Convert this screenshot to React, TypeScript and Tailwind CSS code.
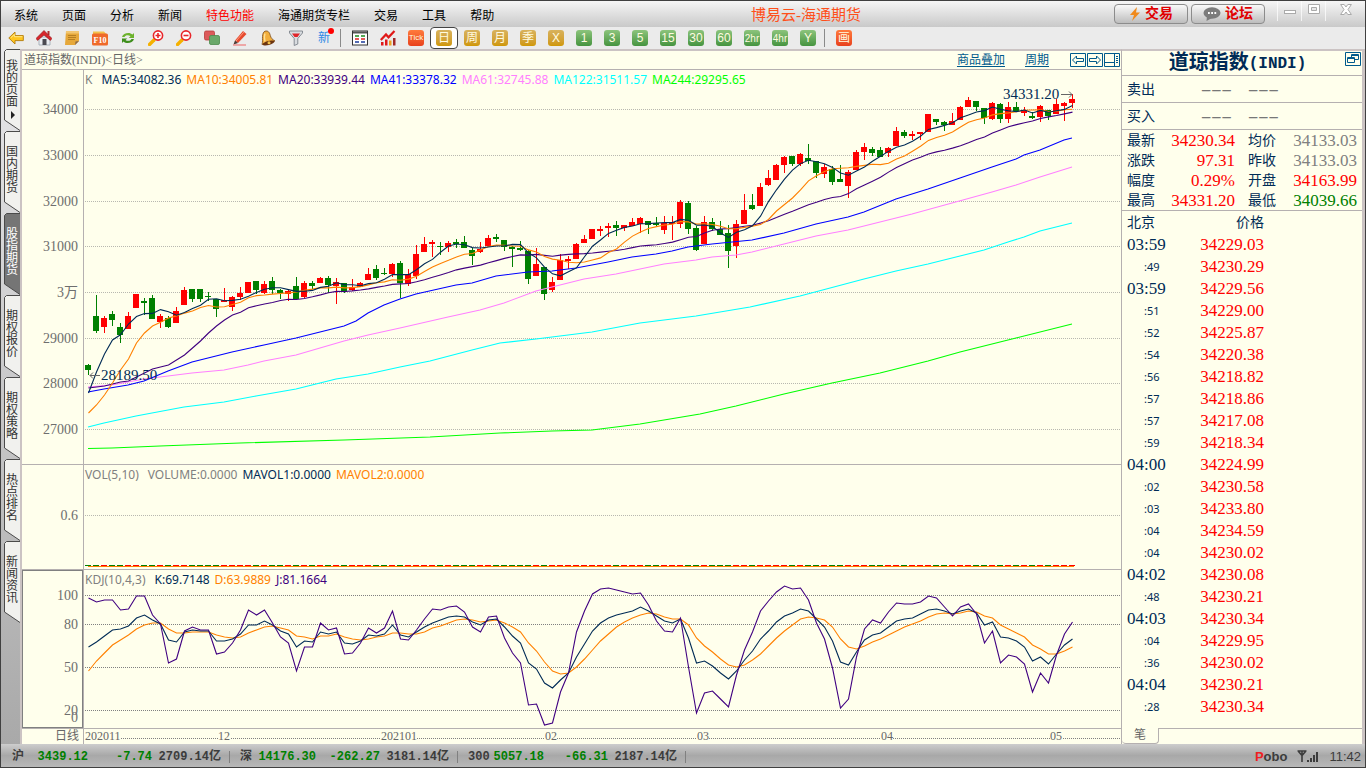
import { type ReactNode } from 'react';
import { clsx } from 'clsx';

// [direction, high, body top, body bottom, low] in chart units
type Candle = ['u' | 'd', number, number, number, number];

const candles: Candle[] = [
  ['d', 364, 365, 370, 375], ['d', 295, 316, 331, 333], ['u', 316, 318, 327, 333], ['d', 311, 314, 320, 326],
  ['d', 323, 327, 335, 343], ['u', 312, 316, 329, 329], ['u', 294, 294, 308, 308], ['d', 298, 301, 303, 315],
  ['d', 295, 298, 319, 319], ['u', 314, 316, 322, 328], ['d', 316, 318, 327, 328], ['u', 307, 311, 323, 323],
  ['u', 287, 290, 305, 305], ['d', 289, 289, 299, 302], ['d', 289, 289, 299, 302], ['d', 292, 296, 297, 301],
  ['d', 299, 299, 309, 317], ['u', 288, 300, 302, 302], ['u', 296, 297, 307, 311], ['u', 287, 293, 297, 300],
  ['u', 282, 282, 293, 293], ['d', 281, 281, 290, 294], ['u', 281, 284, 293, 294], ['d', 277, 281, 290, 294],
  ['d', 289, 290, 293, 299], ['u', 289, 291, 294, 301], ['d', 277, 286, 299, 299], ['u', 281, 283, 297, 298],
  ['d', 281, 283, 286, 289], ['u', 277, 278, 283, 283], ['d', 276, 278, 285, 293], ['u', 278, 282, 286, 304],
  ['d', 283, 283, 292, 293], ['u', 279, 287, 290, 291], ['u', 282, 283, 287, 287], ['u', 268, 274, 280, 280],
  ['d', 265, 269, 278, 280], ['d', 268, 273, 274, 275], ['u', 263, 264, 274, 277], ['d', 261, 263, 283, 298],
  ['u', 269, 274, 284, 286], ['u', 245, 254, 276, 279], ['u', 237, 244, 252, 252], ['u', 240, 242, 244, 257],
  ['d', 242, 246, 247, 255], ['u', 241, 243, 247, 252], ['d', 239, 242, 244, 248], ['d', 236, 242, 248, 248],
  ['d', 248, 250, 256, 265], ['u', 242, 249, 252, 253], ['u', 235, 238, 246, 246], ['d', 234, 237, 239, 242],
  ['d', 240, 240, 247, 251], ['d', 246, 247, 249, 267], ['d', 241, 248, 250, 251], ['d', 250, 251, 279, 284],
  ['u', 248, 264, 276, 276], ['d', 267, 267, 294, 300], ['u', 277, 282, 290, 292], ['u', 254, 260, 280, 280],
  ['u', 256, 259, 261, 269], ['u', 243, 244, 259, 259], ['u', 235, 239, 243, 243], ['u', 229, 229, 239, 239],
  ['u', 226, 229, 231, 236], ['u', 223, 226, 228, 237], ['d', 221, 225, 228, 236], ['u', 225, 225, 228, 231],
  ['u', 218, 222, 226, 226], ['u', 217, 218, 224, 233], ['d', 221, 221, 225, 234], ['d', 217, 223, 225, 226],
  ['u', 216, 223, 230, 234], ['u', 216, 222, 224, 240], ['u', 200, 202, 224, 228], ['d', 201, 203, 229, 234],
  ['d', 226, 228, 250, 251], ['u', 216, 222, 244, 244], ['d', 218, 222, 229, 231], ['d', 221, 229, 235, 235],
  ['d', 225, 233, 251, 268], ['u', 220, 224, 246, 258], ['u', 194, 210, 224, 224], ['d', 194, 205, 209, 210],
  ['u', 183, 187, 206, 206], ['u', 170, 178, 185, 186], ['u', 164, 165, 180, 180], ['u', 156, 157, 165, 173],
  ['d', 156, 156, 164, 166], ['u', 153, 154, 164, 166], ['d', 144, 158, 161, 164], ['d', 161, 161, 173, 178],
  ['u', 164, 167, 174, 178], ['d', 166, 169, 182, 185], ['d', 165, 179, 182, 182], ['u', 170, 172, 186, 198],
  ['u', 150, 152, 170, 170], ['u', 143, 147, 152, 160], ['d', 147, 149, 153, 156], ['d', 147, 150, 157, 157],
  ['u', 147, 148, 153, 157], ['u', 127, 131, 146, 146], ['d', 130, 132, 136, 138], ['u', 131, 134, 136, 140],
  ['u', 132, 132, 134, 140], ['u', 114, 114, 132, 132], ['d', 119, 119, 122, 125], ['d', 121, 122, 125, 131],
  ['u', 113, 121, 125, 125], ['u', 106, 107, 120, 120], ['u', 97, 100, 107, 107], ['d', 101, 101, 107, 111],
  ['d', 108, 108, 118, 124], ['u', 102, 103, 119, 120], ['d', 103, 104, 119, 123], ['u', 102, 107, 119, 123],
  ['d', 102, 107, 111, 112], ['u', 107, 110, 113, 116], ['d', 112, 116, 118, 119], ['u', 105, 106, 117, 122],
  ['d', 110, 110, 116, 120], ['u', 99, 104, 114, 114], ['u', 102, 103, 106, 121], ['u', 94, 99, 103, 108],
];

const closes = candles.map(([dir, , top, bottom]) => (dir === 'u' ? top : bottom));
const xAt = (i: number) => 88 + i * 8;

const toPoints = (values: number[]) => values.map((y, i) => `${xAt(i) + 0.5},${y}`).join(' ');

// the seed holds the values before the window is full
function movingAverage(size: number, seed: number[]) {
  return closes.map((_, i) => {
    if (i < size - 1) return seed[i];
    const part = closes.slice(i - size + 1, i + 1);
    return part.reduce((a, b) => a + b, 0) / size;
  });
}

const priceLines = [
  {
    color: '#00ff00',
    points:
      '88,448.5 112,448 136,447 160,446 240,443 344,440 430,437 500,433 552,431 592,430 640,424 700,414 736,406 784,394 832,383 880,373 928,361 960,352 1016,338 1072,324',
  },
  {
    color: '#00ffff',
    points:
      '88,427 104,423 136,416 184,407 224,402 256,396 296,389 336,379 368,374 400,367 430,361 472,350 500,343 536,339 592,332 640,323 696,316 750,307 800,296 864,279 896,271 928,264 960,256 984,250 1008,242 1024,237 1040,231 1072,223',
  },
  {
    color: '#ff80ff',
    points:
      '88,387 112,385 128,382 144,379 168,376 192,373 224,370 248,365 264,361 296,355 320,348 344,341 368,335 400,328 448,317 480,310 504,303 536,291 552,287 584,279 616,274 664,264 696,260 712,257 736,255 752,252 784,244 816,236 848,230 880,222 912,214 952,203 992,192 1016,185 1040,177 1072,167',
  },
  {
    color: '#0000ff',
    points:
      '88,392 104,389 128,385 144,381 168,371 192,362 232,352 264,345 296,338 320,332 344,326 356,321 368,313 384,305 400,299 416,294 456,285 472,283 496,276 528,272 552,271 576,268 608,262 632,257 656,254 672,251 688,247 712,244 752,240 784,233 816,224 848,217 864,212 896,199 928,189 960,178 992,167 1016,159 1024,155 1040,150 1064,140 1072,138',
  },
  {
    color: '#400080',
    points: toPoints(
      movingAverage(20, [388, 387, 386, 384, 382, 381, 377, 373, 369, 367, 365, 360, 355, 348, 341, 333, 326, 320, 315]),
    ),
  },
  { color: '#ff8000', points: toPoints(movingAverage(10, [413, 405, 395, 383, 370, 359, 343, 333, 326])) },
  { color: '#002b56', points: toPoints(movingAverage(5, [393, 372, 354, 340])) },
];

const kdjLines = [
  {
    color: '#ff8000',
    points: toPoints([
      671, 661, 653, 645, 640, 635, 629, 625, 623, 623, 629, 633, 633, 632, 632, 632, 635, 637, 638, 637, 633, 630, 627,
      626, 628, 630, 636, 637, 639, 636, 636, 634, 637, 639, 640, 639, 637, 636, 633, 633, 634, 634, 632, 628, 626, 623,
      620, 619, 620, 622, 621, 620, 623, 627, 632, 643, 651, 662, 671, 674, 673, 667, 659, 650, 641, 634, 627, 622, 618,
      615, 613, 614, 617, 619, 619, 625, 638, 646, 652, 659, 665, 667, 665, 660, 654, 646, 638, 631, 625, 619, 617, 618,
      620, 627, 639, 647, 649, 646, 642, 639, 635, 631, 627, 624, 621, 617, 614, 613, 614, 613, 611, 612, 616, 618, 625,
      629, 633, 637, 645, 649, 654, 654, 651, 647,
    ]),
  },
  {
    color: '#002b56',
    points: toPoints([
      647, 642, 636, 630, 629, 626, 618, 615, 620, 624, 640, 642, 632, 630, 631, 631, 641, 641, 639, 634, 625, 625, 621,
      625, 631, 634, 647, 641, 642, 632, 634, 632, 643, 644, 641, 635, 636, 634, 625, 635, 637, 632, 627, 623, 620, 617,
      616, 617, 622, 625, 620, 619, 627, 636, 643, 663, 669, 683, 688, 680, 673, 657, 644, 631, 623, 618, 615, 613, 611,
      607, 611, 616, 621, 623, 619, 638, 663, 661, 666, 673, 679, 671, 660, 651, 639, 631, 622, 616, 613, 609, 611, 619,
      627, 641, 662, 665, 652, 640, 635, 633, 627, 621, 619, 618, 614, 610, 609, 611, 614, 611, 609, 613, 625, 622, 637,
      638, 641, 647, 661, 657, 664, 654, 645, 639,
    ]),
  },
  {
    color: '#400080',
    points: toPoints([
      598, 602, 600, 600, 610, 609, 596, 596, 615, 624, 663, 659, 631, 627, 630, 630, 654, 652, 643, 630, 610, 615, 610,
      623, 637, 643, 671, 647, 647, 623, 630, 628, 654, 653, 643, 628, 633, 628, 611, 639, 640, 630, 619, 609, 610, 607,
      606, 612, 627, 632, 617, 616, 638, 653, 663, 705, 704, 725, 723, 692, 673, 632, 611, 594, 589, 588, 590, 592, 594,
      593, 605, 621, 631, 632, 618, 667, 713, 693, 691, 699, 707, 675, 650, 632, 611, 601, 592, 586, 589, 588, 600, 623,
      639, 668, 708, 699, 657, 629, 620, 623, 612, 603, 604, 604, 602, 596, 598, 607, 616, 607, 604, 614, 643, 631, 663,
      655, 657, 664, 692, 673, 683, 655, 634, 622,
    ]),
  },
];

const priceAxis: [string, number][] = [
  ['34000', 109], ['33000', 155], ['32000', 201], ['31000', 246],
  ['3万', 292], ['29000', 338], ['28000', 383], ['27000', 429],
];
const kdjAxis: [string, number][] = [['100', 595], ['80', 624], ['50', 667], ['20', 710]];
const months: [string, number, number][] = [
  ['202011', 85, 36], ['12', 218, 12], ['202101', 381, 36], ['02', 545, 12],
  ['03', 697, 12], ['04', 881, 12], ['05', 1050, 12],
];

const menu = ['系统', '页面', '分析', '新闻', '特色功能', '海通期货专栏', '交易', '工具', '帮助'];
const sideTabs = ['我的页面', '国内期货', '股指期货', '期权报价', '期权策略', '热点排名', '新闻资讯'];

const quotes = [
  ['最新', '34230.34', 'text-[#ff0000]', '均价', '34133.03', 'text-[#808080]'],
  ['涨跌', '97.31', 'text-[#ff0000]', '昨收', '34133.03', 'text-[#808080]'],
  ['幅度', '0.29%', 'text-[#ff0000]', '开盘', '34163.99', 'text-[#ff0000]'],
  ['最高', '34331.20', 'text-[#ff0000]', '最低', '34039.66', 'text-[#008000]'],
];

const ticks = [
  ['03:59', '34229.03'], [':49', '34230.29'], ['03:59', '34229.56'], [':51', '34229.00'], [':52', '34225.87'],
  [':54', '34220.38'], [':56', '34218.82'], [':57', '34218.86'], [':57', '34217.08'], [':59', '34218.34'],
  ['04:00', '34224.99'], [':02', '34230.58'], [':03', '34233.80'], [':04', '34234.59'], [':04', '34230.02'],
  ['04:02', '34230.08'], [':48', '34230.21'], ['04:03', '34230.34'], [':04', '34229.95'], [':36', '34230.02'],
  ['04:04', '34230.21'], [':28', '34230.34'],
];

const indexes = [
  ['沪', '3439.12', '-7.74', '2709.14亿'],
  ['深', '14176.30', '-262.27', '3181.14亿'],
  ['300', '5057.18', '-66.31', '2187.14亿'],
];

function Svg({ children }: { children: ReactNode }) {
  return (
    <svg width="16" height="16" viewBox="0 0 16 16" aria-hidden="true">
      {children}
    </svg>
  );
}

function Magnifier({ plus }: { plus?: boolean }) {
  return (
    <Svg>
      <path d="M1.5 14.5 6 10" stroke="#f5b100" strokeWidth="3.4" strokeLinecap="round" />
      <circle cx="10" cy="5.5" r="4.6" fill="#fff" stroke="#e8262a" strokeWidth="1.6" />
      <path d={plus ? 'M7.5 5.5h5M10 3v5' : 'M7.5 5.5h5'} stroke="#e8262a" strokeWidth="1.6" />
    </Svg>
  );
}

const leftTools: [string, ReactNode][] = [
  [
    '后退',
    <Svg>
      <path d="M.8 8 7 2v3.6h8.3v5H7V14z" fill="#ffc61f" stroke="#b98416" strokeWidth="1" />
      <path d="M3 7.6 6.4 4.4v2.3h8" fill="none" stroke="#ffe88a" />
    </Svg>,
  ],
  [
    '首页',
    <Svg>
      <path d="M3 7h11v8H3z" fill="#e9edf2" stroke="#9aa4b0" strokeWidth=".8" />
      <path d="M11.5 1h2v4h-2z" fill="#b03030" />
      <path d="M0 8.500 8 .5l8 8-1.600 1.900L8 5 1.600 10.400z" fill="#d8262c" stroke="#8a1418" strokeWidth=".6" />
      <path d="M6.500 9h4v6h-4z" fill="#4a4a52" />
    </Svg>,
  ],
  [
    '笔记',
    <Svg>
      <path d="M2 1h13v10l-4 4H1z" fill="#e6a83a" />
      <path d="M2 1h13v2.5H2z" fill="#f2c671" />
      <path d="m11 15 .5-3.5L15 11z" fill="#8a6a4a" />
      <path d="M4 5.5h8M4 7.5h8M4 9.5h7" stroke="#b07a20" strokeWidth=".9" />
    </Svg>,
  ],
  [
    'F10',
    <Svg>
      <path d="M1 1.500h11l3 3.500H1z" fill="#f3c14a" />
      <rect x="0" y="3.500" width="16" height="12" rx="1.500" fill="#ef6a2a" />
      <text x="8" y="13" textAnchor="middle" fontSize="8" fontWeight="bold" fontFamily="Liberation Serif, serif" fill="#fff">
        F10
      </text>
    </Svg>,
  ],
  [
    '刷新',
    <Svg>
      <path d="M2 7c1-4 7.500-5.500 10.500-2.500l1.500-1.500V8H8.800L10.500 6.300C8.500 4.800 5.500 5 4.500 7z" fill="#6cb22c" />
      <path d="M14 9c-1 4-7.500 5.500-10.500 2.500L2 13V8.500h5.200L5.500 10C7.500 11.500 10.500 11 11.500 9z" fill="#3e8e1c" />
    </Svg>,
  ],
  ['放大', <Magnifier plus />],
  ['缩小', <Magnifier />],
  [
    '叠加',
    <Svg>
      <rect x=".5" y="1" width="10" height="9" rx="1.500" fill="#dc5a5a" stroke="#b83c3c" strokeWidth=".8" />
      <rect x="5.500" y="5.500" width="10" height="9" rx="1.500" fill="#6aa86a" stroke="#4d8c4d" strokeWidth=".8" />
    </Svg>,
  ],
  [
    '画线',
    <Svg>
      <path d="M3 10.500 11 1 14.500 4 6 13z" fill="#e64a2e" />
      <path d="M4 11 11.800 2.200" stroke="#ff9a80" strokeWidth="1" />
      <path d="m3 10.500 3 2.500-4.500 1.500z" fill="#4a3a34" />
      <path d="M1 15h13" stroke="#ef7a7a" strokeWidth="1.200" />
    </Svg>,
  ],
  [
    '预警',
    <Svg>
      <path d="M5 1.200c3-.8 4.500 1 5.300 4.300.6 2.500 2 4 4.700 5.500L2 14.500c.9-3 .3-5.500.5-8C2.700 3.500 3.500 1.800 5 1.200z" fill="#f2ae3c" stroke="#7a4a1a" strokeWidth=".8" />
      <path d="M5 3.500c-.8 2-.6 5 0 8" stroke="#ffe09a" strokeWidth="1.300" fill="none" />
      <ellipse cx="8.500" cy="13" rx="6" ry="2" transform="rotate(-14 8.500 13)" fill="#6b3410" />
      <circle cx="9" cy="12.800" r="1.500" fill="#f2c04a" />
    </Svg>,
  ],
  [
    '筛选',
    <Svg>
      <path d="M1.500 1h13v2L9.800 8.500V14l-3.600 1.500v-7L1.500 3z" fill="#d9dce0" stroke="#7d838b" strokeWidth=".9" />
      <path d="M4 3.500h8L9.500 7h-3z" fill="#e0242a" />
    </Svg>,
  ],
  [
    '新',
    <span className="relative text-xs text-[#2f8ae6]">
      新<span className="absolute -top-0.5 -right-1 size-1.5 rounded-full bg-[#ff0000]" />
    </span>,
  ],
];

const viewTools: [string, ReactNode][] = [
  [
    '报价表',
    <Svg>
      <rect x=".5" y="1" width="15" height="14" fill="#fff" stroke="#333" />
      <path d="M1 2.500h14" stroke="#555" strokeWidth="2" />
      <path d="M3 6h4M9 6h4" stroke="#1d8a1d" strokeWidth="1.400" />
      <path d="M3 9h4M9 9h4" stroke="#d22" strokeWidth="1.400" />
      <path d="M3 12h4M9 12h4" stroke="#1c3c9c" strokeWidth="1.400" />
    </Svg>,
  ],
  [
    '走势图',
    <Svg>
      <path d="M.8 10 6 4.500l2.500 2.800L14.500 1" fill="none" stroke="#e01818" strokeWidth="2.200" />
      <path d="M1 12h2.500v3.500H1zM5 9.500h2.500v6H5z" fill="#e01818" />
      <path d="M9 10.500h2.500v5H9z" fill="#f0a020" />
      <path d="M13 8h2.500v7.500H13z" fill="#a02828" />
    </Svg>,
  ],
];

const periodTiles: [string, 'gold' | 'green'][] = [
  ['日', 'gold'], ['周', 'gold'], ['月', 'gold'], ['季', 'gold'], ['X', 'gold'],
  ['1', 'green'], ['3', 'green'], ['5', 'green'], ['15', 'green'], ['30', 'green'],
  ['60', 'green'], ['2hr', 'green'], ['4hr', 'green'], ['Y', 'green'],
];

function Tile({ label, tone }: { label: string; tone: 'gold' | 'green' | 'red' }) {
  return (
    <span
      className={clsx(
        "flex size-4 items-center justify-center rounded-[3px] bg-linear-to-b font-['Liberation_Sans','Noto_Sans_CJK_SC',sans-serif] whitespace-nowrap text-[#fffbe0]",
        label.length > 3 && 'text-[8px]',
        label.length === 3 && 'text-[10px]',
        label.length < 3 && 'text-xs',
        tone === 'gold' && 'from-[#d8b25c] to-[#d09800]',
        tone === 'green' && 'from-[#8cc47c] to-[#45943f]',
        tone === 'red' && 'from-[#ff7a3c] to-[#e8401c]',
      )}
    >
      {label}
    </span>
  );
}

function ToolButton({ label, active, children }: { label: string; active?: boolean; children: ReactNode }) {
  return (
    <button
      aria-label={label}
      className={clsx(
        'flex h-[22px] w-7 items-center justify-center',
        active && 'rounded-sm border border-[#444] bg-white',
      )}
    >
      {children}
    </button>
  );
}

function TitleBar() {
  return (
    <header className="flex h-[26px] bg-linear-to-b from-[#f6f6f6] to-[#c9c9c9] pl-[13px]">
      <nav className="flex items-center gap-6 pt-1 text-xs text-black">
        {menu.map((item) => (
          <button key={item} className={clsx(item === '特色功能' && 'text-[#ff0000]')}>
            {item}
          </button>
        ))}
      </nav>
      <h1 className="flex-1 pt-1 pl-1 text-center text-[15px] leading-5 text-[#ff4f1a]">博易云-海通期货</h1>
      <div className="flex gap-[3px] pt-[3px]">
        <button className="flex h-5 w-[74px] items-center justify-center gap-1 rounded-sm border border-[#8c8c8c] bg-linear-to-b from-[#fafafa] to-[#bdbdbd] text-sm font-bold text-[#e00000]">
          <svg width="12" height="14" viewBox="0 0 12 14">
            <path d="M8 0 1 8h4L3 14l8-8.500H7z" fill="#f08a1c" />
          </svg>
          交易
        </button>
        <button className="flex h-5 w-[74px] items-center justify-center gap-1 rounded-sm border border-[#8c8c8c] bg-linear-to-b from-[#fafafa] to-[#bdbdbd] text-sm font-bold text-[#e00000]">
          <svg width="18" height="14" viewBox="0 0 18 14">
            <ellipse cx="9" cy="6" rx="8.500" ry="5.700" fill="#7c7c7c" />
            <path d="m4 9-.5 5L9 11z" fill="#7c7c7c" />
            <path d="M5 6h1.800M8.200 6H10M11.400 6h1.800" stroke="#fff" strokeWidth="1.800" />
          </svg>
          论坛
        </button>
      </div>
      <div className="ml-3 flex h-5 text-[#a8a8a8]">
        <button aria-label="最小化" className="flex w-6 justify-center border-l border-white/70 pt-[9px]">
          <svg width="12" height="5" viewBox="0 0 12 5">
            <rect x=".5" y=".5" width="11" height="3" fill="#fff" stroke="#aaa" />
          </svg>
        </button>
        <button aria-label="最大化" className="flex w-6 justify-center border-l border-white/70 pt-[3px]">
          <svg width="12" height="10" viewBox="0 0 12 10">
            <path d="M.5.500h11v9H.5zM3.500 3.500h5v3h-5z" fill="#fff" fillRule="evenodd" stroke="#aaa" />
          </svg>
        </button>
        <button aria-label="关闭" className="flex w-10 justify-center border-l border-white/70 pt-[3px]">
          <svg width="12" height="11" viewBox="0 0 12 11">
            <path d="M.6.500h3.600L6 3 7.800.500h3.600L8 5.500l3.400 5H7.800L6 8l-1.800 2.500H.6l3.400-5z" fill="#fff" stroke="#aaa" />
          </svg>
        </button>
      </div>
    </header>
  );
}

function Divider() {
  return <span className="mr-[5px] ml-0.5 h-[18px] w-px bg-[#8a8a8a]" />;
}

function Toolbar() {
  return (
    <div className="flex h-[22px] items-center bg-[#ebebeb] pl-px">
      {leftTools.map(([label, icon]) => (
        <ToolButton key={label} label={label}>
          {icon}
        </ToolButton>
      ))}
      <Divider />
      {viewTools.map(([label, icon]) => (
        <ToolButton key={label} label={label}>
          {icon}
        </ToolButton>
      ))}
      <ToolButton label="Tick">
        <Tile label="Tick" tone="red" />
      </ToolButton>
      {periodTiles.map(([label, tone]) => (
        <ToolButton key={label} label={label} active={label === '日'}>
          <Tile label={label} tone={tone} />
        </ToolButton>
      ))}
      <Divider />
      <ToolButton label="画面">
        <Tile label="画" tone="red" />
      </ToolButton>
    </div>
  );
}

function SideTabs() {
  return (
    <aside className="w-[19px] bg-linear-to-b from-[#e8e8ea] to-[#a9a9a9] pl-[3px]">
      {sideTabs.map((tab, i) => {
        const active = tab === '股指期货';
        return (
          <button
            key={tab}
            className={clsx(
              'relative flex h-[82px] w-4 flex-col items-center text-xs leading-3',
              i === 0 ? 'pt-[11px]' : 'pt-[15px]',
              active ? 'text-white' : 'text-[#333]',
            )}
          >
            <svg className="absolute inset-0" width="16" height="83" viewBox="0 0 16 83">
              <path
                d="M16 .5H2.500L.5 2.500V71L16 81.500z"
                fill={active ? '#757575' : '#f1f1ee'}
                stroke="none"
              />
              <path d="M16 .5H2.500L.5 2.500V71L16 81.500" fill="none" stroke="#4a4a4a" />
            </svg>
            <span className="relative w-3 break-all">{tab}</span>
            {i === 0 && <span className="relative mt-[3px] ml-0.5 border-y-4 border-l-4 border-y-transparent border-l-[#222]" />}
          </button>
        );
      })}
    </aside>
  );
}

function Grid({ ys, color }: { ys: number[]; color: string }) {
  return (
    <>
      {ys.map((y) => (
        <line key={y} x1="85" x2="1121" y1={y + 0.5} y2={y + 0.5} stroke={color} strokeDasharray="1 1" shapeRendering="crispEdges" />
      ))}
    </>
  );
}

function Lines({ lines }: { lines: { color: string; points: string }[] }) {
  return (
    <>
      {lines.map((line) => (
        <polyline key={line.color} points={line.points} fill="none" stroke={line.color} strokeWidth="1.100" />
      ))}
    </>
  );
}

function Axis({ labels, box }: { labels: [string, number][]; box: string }) {
  return (
    <svg className="block size-full" viewBox={box} preserveAspectRatio="xMinYMin slice">
      {labels.map(([label, y]) => (
        <text key={label} x="78" y={y + 5} textAnchor="end" fontSize="14" fill="#6e6e6e">
          {label}
        </text>
      ))}
    </svg>
  );
}

function Legend({ items }: { items: [string, string][] }) {
  return (
    <p className="flex h-5 items-center gap-[5px] pl-px font-['Noto_Sans'] text-xs whitespace-nowrap">
      {items.map(([text, color], i) => (
        <span key={text} className={clsx(color, i === 0 && 'mr-1')}>
          {text}
        </span>
      ))}
    </p>
  );
}

function PricePanel() {
  return (
    <section className="flex h-[395px] border-b border-[#b5b0b0]">
      <div className="w-[62px] border-r border-[#b5b0b0]">
        <Axis labels={priceAxis} box="22 70 61 394" />
      </div>
      <div className="min-w-0 flex-1">
        <Legend
          items={[
            ['K', 'text-[#808080]'],
            ['MA5:34082.36', 'text-[#002b56]'],
            ['MA10:34005.81', 'text-[#ff8000]'],
            ['MA20:33939.44', 'text-[#400080]'],
            ['MA41:33378.32', 'text-[#0000ff]'],
            ['MA61:32745.88', 'text-[#ff80ff]'],
            ['MA122:31511.57', 'text-[#00ffff]'],
            ['MA244:29295.65', 'text-[#00ff00]'],
          ]}
        />
        <svg className="block h-[374px] w-full overflow-visible" viewBox="84 90 1037 374" preserveAspectRatio="xMinYMin meet">
          <Grid ys={priceAxis.map(([, y]) => y)} color="#b8b8b0" />
          {candles.map(([dir, high, top, bottom, low], i) => (
            <g key={i} fill={dir === 'u' ? '#ff0000' : '#008000'} shapeRendering="crispEdges">
              <rect x={xAt(i)} y={high} width="1" height={low - high} />
              <rect x={xAt(i) - 3} y={top} width="6" height={bottom - top} />
            </g>
          ))}
          <Lines lines={priceLines} />
          <g fontSize="15" fill="#002b56">
            <text x="101" y="380">28189.50</text>
            <text x="1003" y="99">34331.20</text>
          </g>
          <path d="M90 375.500h10M93 372.500l-3 3 3 3M1061 94.500h11M1069 91.500l3 3-3 3" fill="none" stroke="#666" />
        </svg>
      </div>
    </section>
  );
}

function VolumePanel() {
  return (
    <section className="flex h-[105px] border-b border-[#b5b0b0]">
      <div className="w-[62px] border-r border-[#b5b0b0]">
        <Axis labels={[['0.6', 515]]} box="22 465 61 104" />
      </div>
      <div className="min-w-0 flex-1">
        <Legend
          items={[
            ['VOL(5,10)', 'text-[#808080]'],
            ['VOLUME:0.0000', 'text-[#808080]'],
            ['MAVOL1:0.0000', 'text-[#002b56]'],
            ['MAVOL2:0.0000', 'text-[#ff8000]'],
          ]}
        />
        <svg className="block h-[84px] w-full" viewBox="84 485 1037 84" preserveAspectRatio="xMinYMin meet">
          <Grid ys={[515]} color="#b8b8b0" />
          <g shapeRendering="crispEdges">
            {candles.map(([dir], i) => (
              <rect key={i} x={xAt(i) - 3} y="565" width="6" height="1" fill={dir === 'u' ? '#ff0000' : '#008000'} />
            ))}
            <rect x="88" y="566" width="986" height="1" fill="#ff8000" />
          </g>
        </svg>
      </div>
    </section>
  );
}

function KdjPanel() {
  return (
    <section className="flex h-[159px] border-b border-[#b5b0b0]">
      <div className="w-[62px] border-r border-[#b5b0b0]">
        <div className="h-full border border-[#808080]">
          <Axis labels={[...kdjAxis, ['0', 717]]} box="23 571 59 156" />
        </div>
      </div>
      <div className="min-w-0 flex-1">
        <Legend
          items={[
            ['KDJ(10,4,3)', 'text-[#808080]'],
            ['K:69.7148', 'text-[#002b56]'],
            ['D:63.9889', 'text-[#ff8000]'],
            ['J:81.1664', 'text-[#400080]'],
          ]}
        />
        <svg className="block h-[138px] w-full overflow-visible" viewBox="84 590 1037 138" preserveAspectRatio="xMinYMin meet">
          <Grid ys={kdjAxis.map(([, y]) => y)} color="#808080" />
          <Lines lines={kdjLines} />
        </svg>
      </div>
    </section>
  );
}

function ChartArea() {
  return (
    <main className="min-w-0 flex-1 border-t-2 border-l-2 border-[#cbc3c3] bg-[#ffffec]">
      <div className="flex h-[19px] items-center border-b border-[#b5b0b0] pl-0.5 text-xs">
        <h2 className="flex-1 text-[#666]">道琼指数(INDI)&lt;日线&gt;</h2>
        <a href="#overlay" className="mr-5 text-[#005a8c] underline underline-offset-2">
          商品叠加
        </a>
        <a href="#period" className="mr-[21px] text-[#005a8c] underline underline-offset-2">
          周期
        </a>
        <div className="mr-px flex gap-px">
          <button aria-label="向左">
            <svg className="block" width="16" height="14" viewBox="0 0 16 14" fill="none" stroke="#005a8c">
              <path d="M.5.500h15v13H.5z" />
              <path d="M2.500 7 6.500 3v2.500h7v3h-7V11z" />
            </svg>
          </button>
          <button aria-label="向右">
            <svg className="block" width="16" height="14" viewBox="0 0 16 14" fill="none" stroke="#005a8c">
              <path d="M.5.500h15v13H.5z" />
              <path d="M13.500 7 9.500 3v2.500h-7v3h7V11z" />
            </svg>
          </button>
          <button aria-label="侧栏">
            <svg className="block" width="16" height="14" viewBox="0 0 16 14" fill="none" stroke="#005a8c">
              <path d="M.5.500h15v13H.5zM10.500 0v14M0 9.500h10" />
              <path d="M12 3.500h2M12 5.500h2M12 7.500h2M12 9.500h2" />
            </svg>
          </button>
        </div>
      </div>
      <PricePanel />
      <VolumePanel />
      <KdjPanel />
      <div className="flex h-[15px]">
        <div className="w-[62px] border-r border-[#b5b0b0] pr-1 text-right text-xs leading-[14px] text-[#666]">日线</div>
        <svg className="block h-[15px] min-w-0 flex-1" viewBox="84 729 1037 15" preserveAspectRatio="xMinYMin meet">
          <Grid ys={[738]} color="#808080" />
          {months.map(([label, x, width]) => (
            <g key={label}>
              <rect x={x} y="730" width={width} height="13" fill="#ffffec" />
              <text x={x} y="740" fontSize="12" fill="#666">
                {label}
              </text>
            </g>
          ))}
        </svg>
      </div>
    </main>
  );
}

function QuotePanel() {
  return (
    <aside className="flex w-[241px] flex-col border-t-2 border-l border-t-[#cbc3c3] border-l-[#b5b0b0] bg-[#ffffec] text-sm text-[#002b56]">
      <div className="flex h-[25px] border-b border-[#b5b0b0]">
        <h2 className="flex flex-1 items-center justify-center pt-0.5 pl-2 font-['Liberation_Mono','Noto_Sans_CJK_SC',monospace] font-bold">
          <span className="text-xl leading-5">道琼指数</span>
          <span className="text-base leading-5">(INDI)</span>
        </h2>
        <button aria-label="还原" className="self-start pt-px pr-px">
          <svg className="block" width="16" height="14" viewBox="0 0 16 14" fill="none" stroke="#005a8c">
            <path d="M.5.500h15v13H.5z" />
            <path d="M6.500 5V2.500h7v5H10M6.500 3.500h7" />
            <path d="M2.500 5.500h7v5h-7zM2.500 6.500h7" fill="#ffffec" />
          </svg>
        </button>
      </div>
      {['卖出', '买入'].map((side) => (
        <div key={side} className="flex h-[27px] items-center border-b border-[#b5b0b0] pt-0.5 pl-[5px]">
          <span className="w-[74px]">{side}</span>
          <span className="flex gap-4 font-['Noto_Sans'] text-lg leading-6 text-[#777]">
            <span>−−−</span>
            <span>−−−</span>
          </span>
        </div>
      ))}
      <div className="border-b border-[#b5b0b0] pt-px">
        <table className="h-[79px] w-full">
          <tbody>
            {quotes.map(([a, av, ac, b, bv, bc]) => (
              <tr key={a} className="leading-[19px]">
                <th scope="row" className="w-[34px] pl-[5px] text-left font-normal">{a}</th>
                <td className={clsx('w-[79px] text-right text-[17px]', ac)}>{av}</td>
                <th scope="row" className="w-[42px] pl-[13px] text-left font-normal">{b}</th>
                <td className={clsx('pr-[5px] text-right text-[17px]', bc)}>{bv}</td>
              </tr>
            ))}
          </tbody>
        </table>
      </div>
      <table className="mt-px w-[142px]">
        <thead>
          <tr className="h-[22px] leading-[22px]">
            <th className="pl-[5px] text-left font-normal">北京</th>
            <th className="text-right font-normal">价格</th>
          </tr>
        </thead>
        <tbody>
          {ticks.map(([time, price], i) => (
            <tr key={i} className="h-[22px] leading-[22px]">
              <td className={time.length > 3 ? 'pl-[5px] text-[17px]' : "pl-[22px] font-['Noto_Sans'] text-[11px]"}>
                {time}
              </td>
              <td className="text-right text-[17px] text-[#ff0000]">{price}</td>
            </tr>
          ))}
        </tbody>
      </table>
      <div className="mt-auto flex h-4">
        <button className="w-[37px] rounded-b-sm border-r border-b border-[#b5b0b0] text-xs leading-[15px] text-[#666]">笔</button>
        <span className="flex-1 border-t border-[#b5b0b0]" />
      </div>
    </aside>
  );
}

function StatusBar() {
  return (
    <footer className="flex h-[23px] items-center bg-linear-to-b from-[#cdcdcd] via-[#a8a8a8] to-[#b8b8b8] pt-0.5 pl-[11px] font-['Liberation_Mono','Noto_Sans_CJK_SC',monospace] text-xs font-bold text-[#3c3c3c]">
      {indexes.map(([name, value, change, amount]) => (
        <div key={name} className="flex items-center">
          <span className="flex w-[76px] justify-between">
            {name}
            <span className="text-[#008000]">{value}</span>
          </span>
          <span className="w-16 text-right text-[#008000]">{change}</span>
          <span className="w-[69px] text-right whitespace-nowrap">{amount}</span>
          <span className="mr-[10px] ml-2 h-3 w-px bg-[#808080]" />
        </div>
      ))}
      <span className="ml-auto font-['Liberation_Sans'] text-[13px] leading-4">
        <span className="text-[#f02020]">P</span>obo
      </span>
      <svg className="mx-2.5" width="22" height="13" viewBox="0 0 22 13" fill="none" stroke="#3c3c3c">
        <path d="M.5 1h9M1.500 1.500 5 5.500l3.500-4M5 1v11" strokeWidth="1.600" />
        <path d="M11 10v2M14 8v4M17 5v7M20 2v10" strokeWidth="2" />
      </svg>
      <time className="pr-1 font-['Liberation_Sans'] text-[13px] leading-4 font-normal">11:42</time>
    </footer>
  );
}

export default function App() {
  return (
    <div className="flex min-h-screen flex-col border border-[#404040] bg-[#cbc3c3] font-['Liberation_Serif','Noto_Sans_CJK_SC',serif]">
      <TitleBar />
      <Toolbar />
      <div className="flex flex-1">
        <SideTabs />
        <ChartArea />
        <QuotePanel />
        <div className="w-[3px] bg-[#cbc3c3]" />
      </div>
      <StatusBar />
    </div>
  );
}
